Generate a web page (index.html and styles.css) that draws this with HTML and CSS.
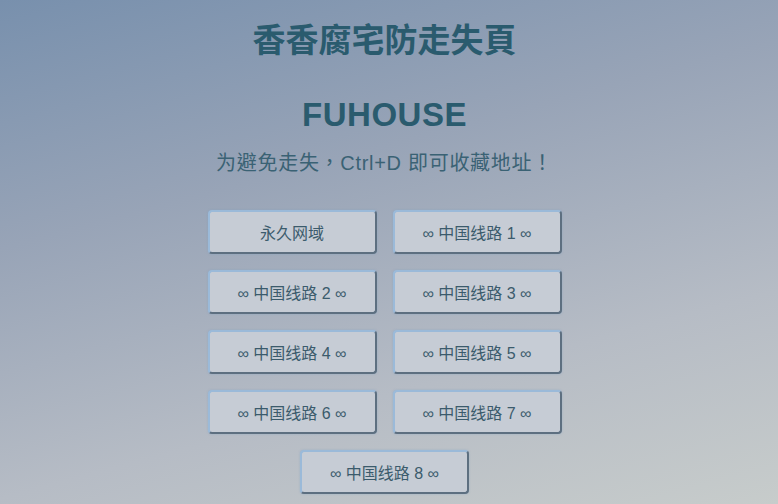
FILE: index.html
```html
<!DOCTYPE html>
<html lang="zh">
<head>
<meta charset="utf-8">
<title>香香腐宅防走失頁</title>
<link rel="stylesheet" href="styles.css">
</head>
<body>
<div class="page">
  <h1 class="title">香香腐宅防走失頁</h1>
  <h2 class="brand">FUHOUSE</h2>
  <p class="tip" lang="zh-Hant">为避免走失，Ctrl+D 即可收藏地址！</p>
  <div class="links">
    <a class="btn" href="#">永久网域</a>
    <a class="btn" href="#">∞ 中国线路 1 ∞</a>
    <a class="btn" href="#">∞ 中国线路 2 ∞</a>
    <a class="btn" href="#">∞ 中国线路 3 ∞</a>
    <a class="btn" href="#">∞ 中国线路 4 ∞</a>
    <a class="btn" href="#">∞ 中国线路 5 ∞</a>
    <a class="btn" href="#">∞ 中国线路 6 ∞</a>
    <a class="btn" href="#">∞ 中国线路 7 ∞</a>
    <a class="btn btn-last" href="#">∞ 中国线路 8 ∞</a>
  </div>
</div>
</body>
</html>
```
FILE: styles.css
```css
html, body {
  margin: 0;
  padding: 0;
  height: 100%;
}
body {
  background: linear-gradient(165deg, #7890ad 0%, #98a4b7 35%, #b6bcc5 70%, #c7cccb 100%);
  font-family: "Liberation Sans", Arial, "Noto Sans CJK SC", sans-serif;
  overflow: hidden;
}
.page {
  display: flex;
  flex-direction: column;
  align-items: center;
  padding-right: 9px;
  text-align: center;
}
.title {
  margin: 21px 0 0;
  font-size: 33px;
  line-height: 40px;
  font-weight: bold;
  color: #2a5b6e;
}
.brand {
  margin: 34px 0 0;
  font-size: 33px;
  line-height: 40px;
  font-weight: bold;
  letter-spacing: 0.5px;
  color: #2a5b6e;
}
.tip {
  margin: 14px 0 0;
  font-family: "Liberation Sans", Arial, "Noto Sans CJK TC", sans-serif;
  font-size: 20px;
  line-height: 28px;
  letter-spacing: 0.7px;
  color: #3a6274;
}
.links {
  margin-top: 33px;
  display: grid;
  grid-template-columns: 169px 169px;
  gap: 16px;
}
.btn {
  box-sizing: border-box;
  height: 44px;
  display: flex;
  align-items: center;
  justify-content: center;
  background: #c6ccd5;
  border: 2px solid;
  border-color: #9bbad9 #5d6f80 #5d6f80 #9bbad9;
  border-radius: 4px;
  box-shadow: 0 0 2px rgba(120, 160, 200, 0.5);
  color: #3b5b6c;
  font-size: 16px;
  text-decoration: none;
}
.btn-last {
  grid-column: 1 / -1;
  justify-self: center;
  width: 169px;
}
```
